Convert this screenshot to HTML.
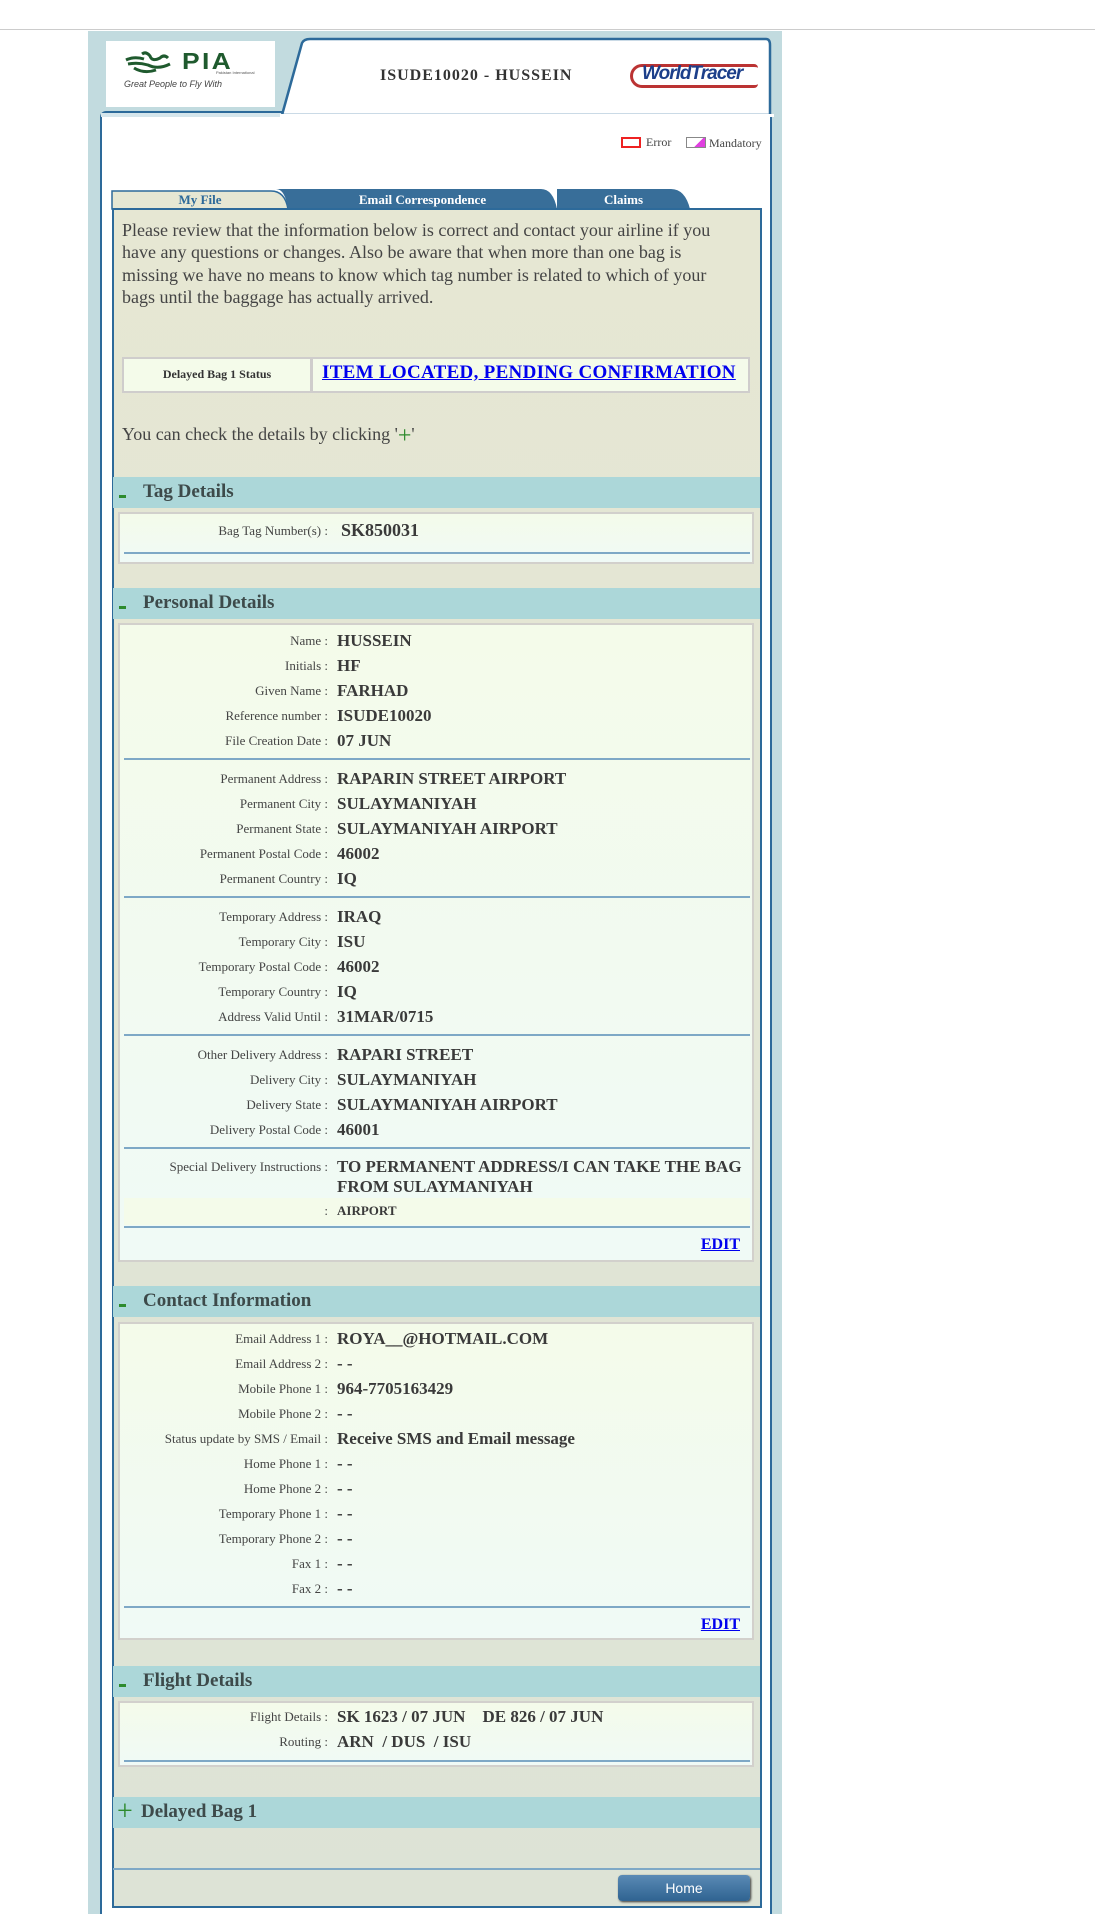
<!DOCTYPE html>
<html><head><meta charset="utf-8"><style>
*{margin:0;padding:0;box-sizing:border-box}
body{width:1095px;height:1914px;background:#fff;position:relative;overflow:hidden;font-family:"Liberation Serif",serif;color:#333}
.a{position:absolute}
.hline{left:0;width:1095px;top:29px;height:1px;background:#ccc}
.outer{left:88px;top:31px;width:694px;height:1883px;background:#c2dbdf}
.lbl{position:absolute;right:767px;font-size:13px;color:#444;white-space:nowrap}
.val{position:absolute;left:337px;font-size:17px;font-weight:bold;color:#3a3a3a;white-space:nowrap}
.row{position:absolute;left:0;width:1095px;height:25px;line-height:25px}
.bar{position:absolute;left:113px;width:647px;background:#acd7d9;font-weight:bold;font-size:19px;color:#3d4a4a}
.bar .t{position:absolute;left:30px;top:0}
.bar .m{position:absolute;left:6px;width:7px;height:3px;background:#2d8a2d}
.box{position:absolute;left:118px;width:636px;border:2px solid #d2d0cc;background:linear-gradient(#f4fbea,#f0faf6)}
.ln{position:absolute;left:124px;width:626px;height:2px;background:#7ea8c6}
.edit{position:absolute;right:355px;font-size:16px;font-weight:bold;color:#0000ee;text-decoration:underline}
</style></head><body>
<div class="a hline"></div>
<div class="a outer"></div>
<div class="a" style="left:100px;top:111px;width:672px;height:1803px;background:#fff;border:2px solid #2d6a9a;border-radius:6px 6px 0 0;border-bottom:none"></div>
<div class="a" style="left:101px;top:113px;width:670px;height:4px;background:#d6e6ec"></div>
<svg class="a" style="left:280px;top:37px" width="494" height="80"><path d="M2 78 L22 6 Q24 2 30 2 L486 2 Q490 2 490 8 L490 78 Z" fill="#fff" stroke="#2d6a9a" stroke-width="2.5"/><rect x="0" y="77" width="494" height="4" fill="#fff"/></svg>
<div class="a" style="left:106px;top:41px;width:169px;height:66px;background:#fff"></div>
<svg class="a" style="left:124px;top:50px" width="60" height="26"><path d="M2 10 Q10 6 20 9 M4 14 Q14 12 24 15 Q34 20 46 14 M18 4 Q22 1 26 6 Q28 12 36 8 Q40 4 44 8 M10 18 Q20 24 32 20" fill="none" stroke="#1f5a2e" stroke-width="3"/></svg>
<div class="a" style="left:182px;top:48px;font-family:'Liberation Sans',sans-serif;font-weight:bold;font-size:23px;color:#1f5a2e;letter-spacing:2px;transform:scaleX(1.15);transform-origin:left">PIA</div>
<div class="a" style="left:216px;top:70px;font-family:'Liberation Sans',sans-serif;font-size:4px;color:#555">Pakistan International</div>
<div class="a" style="left:124px;top:79px;font-family:'Liberation Sans',sans-serif;font-style:italic;font-size:9px;color:#444">Great People to Fly With</div>
<div class="a" style="left:380px;top:67px;font-size:16px;font-weight:bold;color:#333;letter-spacing:1px">ISUDE10020 - HUSSEIN</div>
<div class="a" style="left:630px;top:64px;width:128px;height:24px;border:3px solid #b33;border-radius:12px 4px 4px 12px;border-right:none"></div>
<div class="a" style="left:642px;top:63px;font-family:'Liberation Sans',sans-serif;font-style:italic;font-weight:bold;font-size:19px;color:#1c3f8a;letter-spacing:-1px">WorldTracer</div>
<div class="a" style="left:621px;top:137px;width:20px;height:11px;border:2px solid #e22"></div>
<div class="a" style="left:646px;top:135px;font-size:12px;color:#444">Error</div>
<div class="a" style="left:686px;top:137px;width:20px;height:11px;border:1px solid #888;background:linear-gradient(135deg,#fff 60%,#e040e0 60%)"></div>
<div class="a" style="left:709px;top:136px;font-size:12px;color:#444">Mandatory</div>
<svg class="a" style="left:111px;top:188px" width="590" height="22">
<path d="M1 21 L1 3 L160 3 Q174 3 177 21 Z" fill="#e6e7d3" stroke="#2d6a9a" stroke-width="1.5"/>
<path d="M177 21 Q174 1 165 1 L430 1 Q442 1 446 21 Z" fill="#386e99"/>
<path d="M446 21 L446 1 L560 1 Q574 1 579 21 Z" fill="#386e99"/>
</svg>
<div class="a" style="left:112px;top:192px;width:176px;text-align:center;font-size:13px;font-weight:bold;color:#2d6a9a">My File</div>
<div class="a" style="left:288px;top:192px;width:269px;text-align:center;font-size:13px;font-weight:bold;color:#fff">Email Correspondence</div>
<div class="a" style="left:557px;top:192px;width:133px;text-align:center;font-size:13px;font-weight:bold;color:#fff">Claims</div>
<div class="a" style="left:112px;top:208px;width:650px;height:1700px;background:linear-gradient(#e6e7d3,#dde3d6);border:2px solid #2d6a9a"></div>
<div class="a" style="left:122px;top:219px;width:615px;font-size:18px;line-height:22.4px;color:#444">Please review that the information below is correct and contact your airline if you have any questions or changes. Also be aware that when more than one bag is missing we have no means to know which tag number is related to which of your bags until the baggage has actually arrived.</div>
<div class="a" style="left:122px;top:357px;width:628px;height:36px;border:2px solid #cfcdcc;background:#f4fbea"></div>
<div class="a" style="left:310px;top:357px;width:3px;height:36px;background:#cfcdcc"></div>
<div class="a" style="left:124px;top:367px;width:186px;text-align:center;font-size:12px;font-weight:bold;color:#333">Delayed Bag 1 Status</div>
<div class="a" style="left:322px;top:362px;font-size:19px;font-weight:bold;color:#0000ee;text-decoration:underline;letter-spacing:0.3px">ITEM LOCATED, PENDING CONFIRMATION</div>
<div class="a" style="left:122px;top:424px;font-size:18px;color:#444">You can check the details by clicking '<span style="color:#2d8a2d;font-size:24px;line-height:10px;position:relative;top:3px">+</span>'</div>

<div class="bar" style="top:477px;height:31px"><div class="m" style="top:18px"></div><div class="t" style="top:4px">Tag Details</div></div>
<div class="box" style="top:512px;height:52px"></div>
<div class="ln" style="top:552px"></div>
<div class="row" style="top:518px"><span class="lbl">Bag Tag Number(s) :</span><span class="val" style="left:341px;font-size:18px">SK850031</span></div>

<div class="bar" style="top:588px;height:31px"><div class="m" style="top:18px"></div><div class="t" style="top:4px">Personal Details</div></div>
<div class="box" style="top:623px;height:639px"></div>
<div class="row" style="top:628px"><span class="lbl">Name :</span><span class="val">HUSSEIN</span></div>
<div class="row" style="top:653px"><span class="lbl">Initials :</span><span class="val">HF</span></div>
<div class="row" style="top:678px"><span class="lbl">Given Name :</span><span class="val">FARHAD</span></div>
<div class="row" style="top:703px"><span class="lbl">Reference number :</span><span class="val">ISUDE10020</span></div>
<div class="row" style="top:728px"><span class="lbl">File Creation Date :</span><span class="val">07 JUN</span></div>
<div class="ln" style="top:758px"></div>
<div class="row" style="top:766px"><span class="lbl">Permanent Address :</span><span class="val">RAPARIN STREET AIRPORT</span></div>
<div class="row" style="top:791px"><span class="lbl">Permanent City :</span><span class="val">SULAYMANIYAH</span></div>
<div class="row" style="top:816px"><span class="lbl">Permanent State :</span><span class="val">SULAYMANIYAH AIRPORT</span></div>
<div class="row" style="top:841px"><span class="lbl">Permanent Postal Code :</span><span class="val">46002</span></div>
<div class="row" style="top:866px"><span class="lbl">Permanent Country :</span><span class="val">IQ</span></div>
<div class="ln" style="top:896px"></div>
<div class="row" style="top:904px"><span class="lbl">Temporary Address :</span><span class="val">IRAQ</span></div>
<div class="row" style="top:929px"><span class="lbl">Temporary City :</span><span class="val">ISU</span></div>
<div class="row" style="top:954px"><span class="lbl">Temporary Postal Code :</span><span class="val">46002</span></div>
<div class="row" style="top:979px"><span class="lbl">Temporary Country :</span><span class="val">IQ</span></div>
<div class="row" style="top:1004px"><span class="lbl">Address Valid Until :</span><span class="val">31MAR/0715</span></div>
<div class="ln" style="top:1034px"></div>
<div class="row" style="top:1042px"><span class="lbl">Other Delivery Address :</span><span class="val">RAPARI STREET</span></div>
<div class="row" style="top:1067px"><span class="lbl">Delivery City :</span><span class="val">SULAYMANIYAH</span></div>
<div class="row" style="top:1092px"><span class="lbl">Delivery State :</span><span class="val">SULAYMANIYAH AIRPORT</span></div>
<div class="row" style="top:1117px"><span class="lbl">Delivery Postal Code :</span><span class="val">46001</span></div>
<div class="ln" style="top:1147px"></div>
<div class="a" style="left:124px;top:1198px;width:626px;height:27px;background:#f4fbea"></div>
<div class="row" style="top:1154px"><span class="lbl">Special Delivery Instructions :</span></div>
<div class="a" style="left:337px;top:1157px;width:416px;font-size:17px;font-weight:bold;color:#3a3a3a;line-height:20px">TO PERMANENT ADDRESS/I CAN TAKE THE BAG FROM SULAYMANIYAH</div>
<div class="row" style="top:1198px"><span class="lbl">:</span><span class="val" style="font-size:13px">AIRPORT</span></div>
<div class="ln" style="top:1226px"></div>
<div class="edit" style="top:1236px">EDIT</div>

<div class="bar" style="top:1286px;height:31px"><div class="m" style="top:18px"></div><div class="t" style="top:4px">Contact Information</div></div>
<div class="box" style="top:1322px;height:318px"></div>
<div class="row" style="top:1326px"><span class="lbl">Email Address 1 :</span><span class="val">ROYA__@HOTMAIL.COM</span></div>
<div class="row" style="top:1351px"><span class="lbl">Email Address 2 :</span><span class="val">- -</span></div>
<div class="row" style="top:1376px"><span class="lbl">Mobile Phone 1 :</span><span class="val">964-7705163429</span></div>
<div class="row" style="top:1401px"><span class="lbl">Mobile Phone 2 :</span><span class="val">- -</span></div>
<div class="row" style="top:1426px"><span class="lbl">Status update by SMS / Email :</span><span class="val">Receive SMS and Email message</span></div>
<div class="row" style="top:1451px"><span class="lbl">Home Phone 1 :</span><span class="val">- -</span></div>
<div class="row" style="top:1476px"><span class="lbl">Home Phone 2 :</span><span class="val">- -</span></div>
<div class="row" style="top:1501px"><span class="lbl">Temporary Phone 1 :</span><span class="val">- -</span></div>
<div class="row" style="top:1526px"><span class="lbl">Temporary Phone 2 :</span><span class="val">- -</span></div>
<div class="row" style="top:1551px"><span class="lbl">Fax 1 :</span><span class="val">- -</span></div>
<div class="row" style="top:1576px"><span class="lbl">Fax 2 :</span><span class="val">- -</span></div>
<div class="ln" style="top:1606px"></div>
<div class="edit" style="top:1616px">EDIT</div>

<div class="bar" style="top:1666px;height:31px"><div class="m" style="top:18px"></div><div class="t" style="top:4px">Flight Details</div></div>
<div class="box" style="top:1701px;height:66px"></div>
<div class="row" style="top:1704px"><span class="lbl">Flight Details :</span><span class="val">SK 1623 / 07 JUN &nbsp;&nbsp; DE 826 / 07 JUN</span></div>
<div class="row" style="top:1729px"><span class="lbl">Routing :</span><span class="val">ARN &nbsp;/ DUS &nbsp;/ ISU</span></div>
<div class="ln" style="top:1760px"></div>

<div class="bar" style="top:1797px;height:31px"><div class="t" style="left:28px;top:4px">Delayed Bag 1</div><div style="position:absolute;left:4px;top:-1px;color:#2d8a2d;font-size:28px;font-weight:normal">+</div></div>
<div class="a" style="left:113px;top:1868px;width:647px;height:2px;background:#7ea8c6"></div>
<div class="a" style="left:618px;top:1875px;width:132px;height:26px;border-radius:4px;background:linear-gradient(#5a8ab5,#2f6391);box-shadow:1px 1px 2px #333;color:#fff;font-family:'Liberation Sans',sans-serif;font-size:14px;text-align:center;line-height:26px">Home</div>
</body></html>
